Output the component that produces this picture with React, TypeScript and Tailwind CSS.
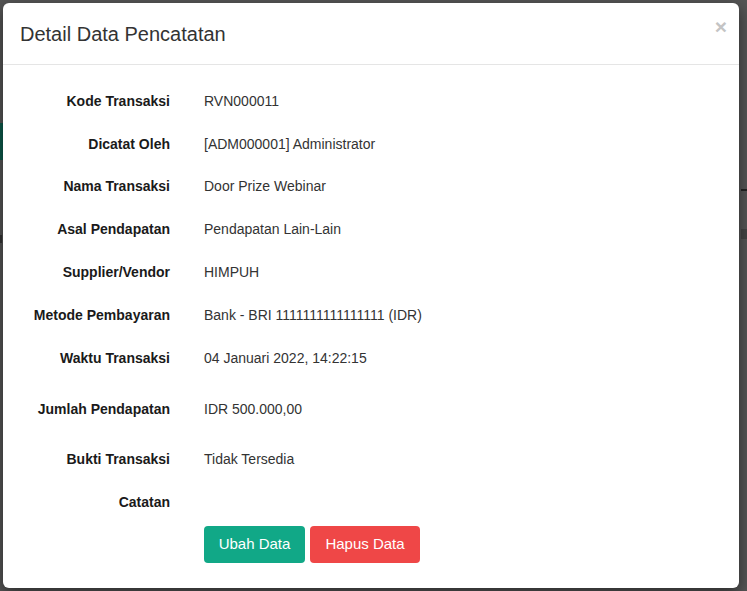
import React from "react";

const rows: { label: string; value: string; extra?: string }[] = [
  { label: "Kode Transaksi", value: "RVN000011", extra: "h-[43px]" },
  { label: "Dicatat Oleh", value: "[ADM000001] Administrator", extra: "h-[42px]" },
  { label: "Nama Transaksi", value: "Door Prize Webinar", extra: "h-[43px]" },
  { label: "Asal Pendapatan", value: "Pendapatan Lain-Lain", extra: "h-[43px]" },
  { label: "Supplier/Vendor", value: "HIMPUH", extra: "h-[43px]" },
  { label: "Metode Pembayaran", value: "Bank - BRI 1111111111111111 (IDR)", extra: "h-[43px]" },
  { label: "Waktu Transaksi", value: "04 Januari 2022, 14:22:15", extra: "h-[43px]" },
  { label: "Jumlah Pendapatan", value: "IDR 500.000,00", extra: "h-[43px] mt-[8px]" },
  { label: "Bukti Transaksi", value: "Tidak Tersedia", extra: "h-[43px] mt-[7px]" },
  { label: "Catatan", value: "", extra: "h-[43px]" },
];

export default function App() {
  return (
    <div
      className="relative w-[747px] h-[591px] overflow-hidden bg-[#555555]"
      style={{ fontFamily: '"Liberation Sans", Arial, sans-serif' }}
    >
      {/* background fragments */}
      <div className="absolute left-0 top-[123px] w-[3px] h-[37px] bg-[#0d5a4b]" />
      <div className="absolute left-0 top-[235px] w-[2px] h-[8px] bg-[#333]" />
      <div className="absolute right-0 top-[189px] w-[6px] h-[2px] bg-[#222]" />
      <div className="absolute right-0 top-[229px] w-[6px] h-[10px] bg-[#444]" />

      <div className="absolute left-[3px] top-[3px] w-[736px] h-[585px] bg-white rounded-[6px] shadow-[0_5px_15px_rgba(0,0,0,0.5)] flex flex-col">
        <div className="h-[62px] border-b border-[#e5e5e5] flex items-center justify-between pl-[17px] pr-[12px]">
          <h4 className="text-[20px] text-[#333] leading-none">Detail Data Pencatatan</h4>
          <span className="text-[21px] font-bold leading-none text-[#c4c4c4] -mt-[14px]">×</span>
        </div>
        <div className="pt-[15px] flex flex-col">
          {rows.map((r) => (
            <div key={r.label} className={`flex items-center ${r.extra ?? ""}`}>
              <div className="w-[167px] text-right text-[14px] font-bold text-[#1a1a1a]">{r.label}</div>
              <div className="ml-[34px] text-[14px] text-[#333]">{r.value}</div>
            </div>
          ))}
          <div className="flex items-start h-[43px] ml-[201px] gap-[5px] pt-[2px]">
            <button className="h-[37px] w-[101px] rounded-[4px] bg-[#11a887] text-white text-[15px] text-center">
              Ubah Data
            </button>
            <button className="h-[37px] w-[110px] rounded-[4px] bg-[#ef4747] text-white text-[15px] text-center">
              Hapus Data
            </button>
          </div>
        </div>
      </div>
    </div>
  );
}
